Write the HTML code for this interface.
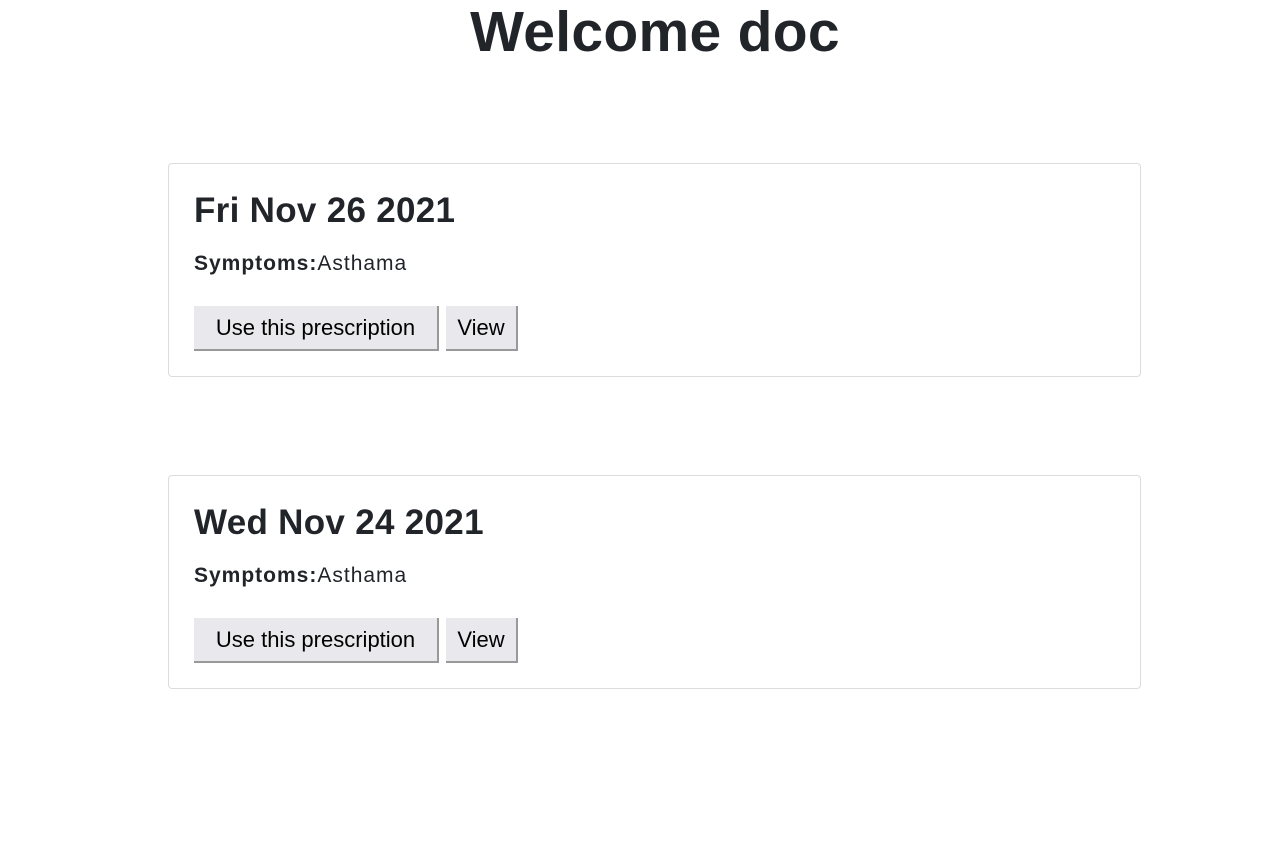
<!DOCTYPE html>
<html><head><meta charset="utf-8"><style>
*{margin:0;padding:0;box-sizing:border-box}
body{width:1280px;height:867px;background:#fff;font-family:"Liberation Sans",sans-serif;color:#212529;position:relative;overflow:hidden}
h1{position:absolute;left:0;width:1310px;text-align:center;top:-2px;font-size:57px;font-weight:bold;line-height:68px;letter-spacing:0.3px}
.card{position:absolute;left:168px;width:973px;height:214px;border:1px solid #dcdcdc;border-radius:4px}
.card h2{position:absolute;left:25px;top:26px;font-size:35px;font-weight:bold;line-height:42px;letter-spacing:0.3px}
.card p{position:absolute;left:25px;top:87px;font-size:21px;line-height:26px;letter-spacing:1px}
.btn{position:absolute;top:142px;height:45px;background:#e9e9ed;border-right:2px solid #999;border-bottom:2px solid #999;font-size:22px;line-height:43px;text-align:center;color:#000}
</style></head><body>
<h1>Welcome doc</h1>
<div class="card" style="top:163px"><h2>Fri Nov 26 2021</h2><p><b>Symptoms:</b>Asthama</p>
<div class="btn" style="left:25px;width:245px">Use this prescription</div><div class="btn" style="left:277px;width:72px">View</div></div>
<div class="card" style="top:475px"><h2>Wed Nov 24 2021</h2><p><b>Symptoms:</b>Asthama</p>
<div class="btn" style="left:25px;width:245px">Use this prescription</div><div class="btn" style="left:277px;width:72px">View</div></div>
</body></html>
